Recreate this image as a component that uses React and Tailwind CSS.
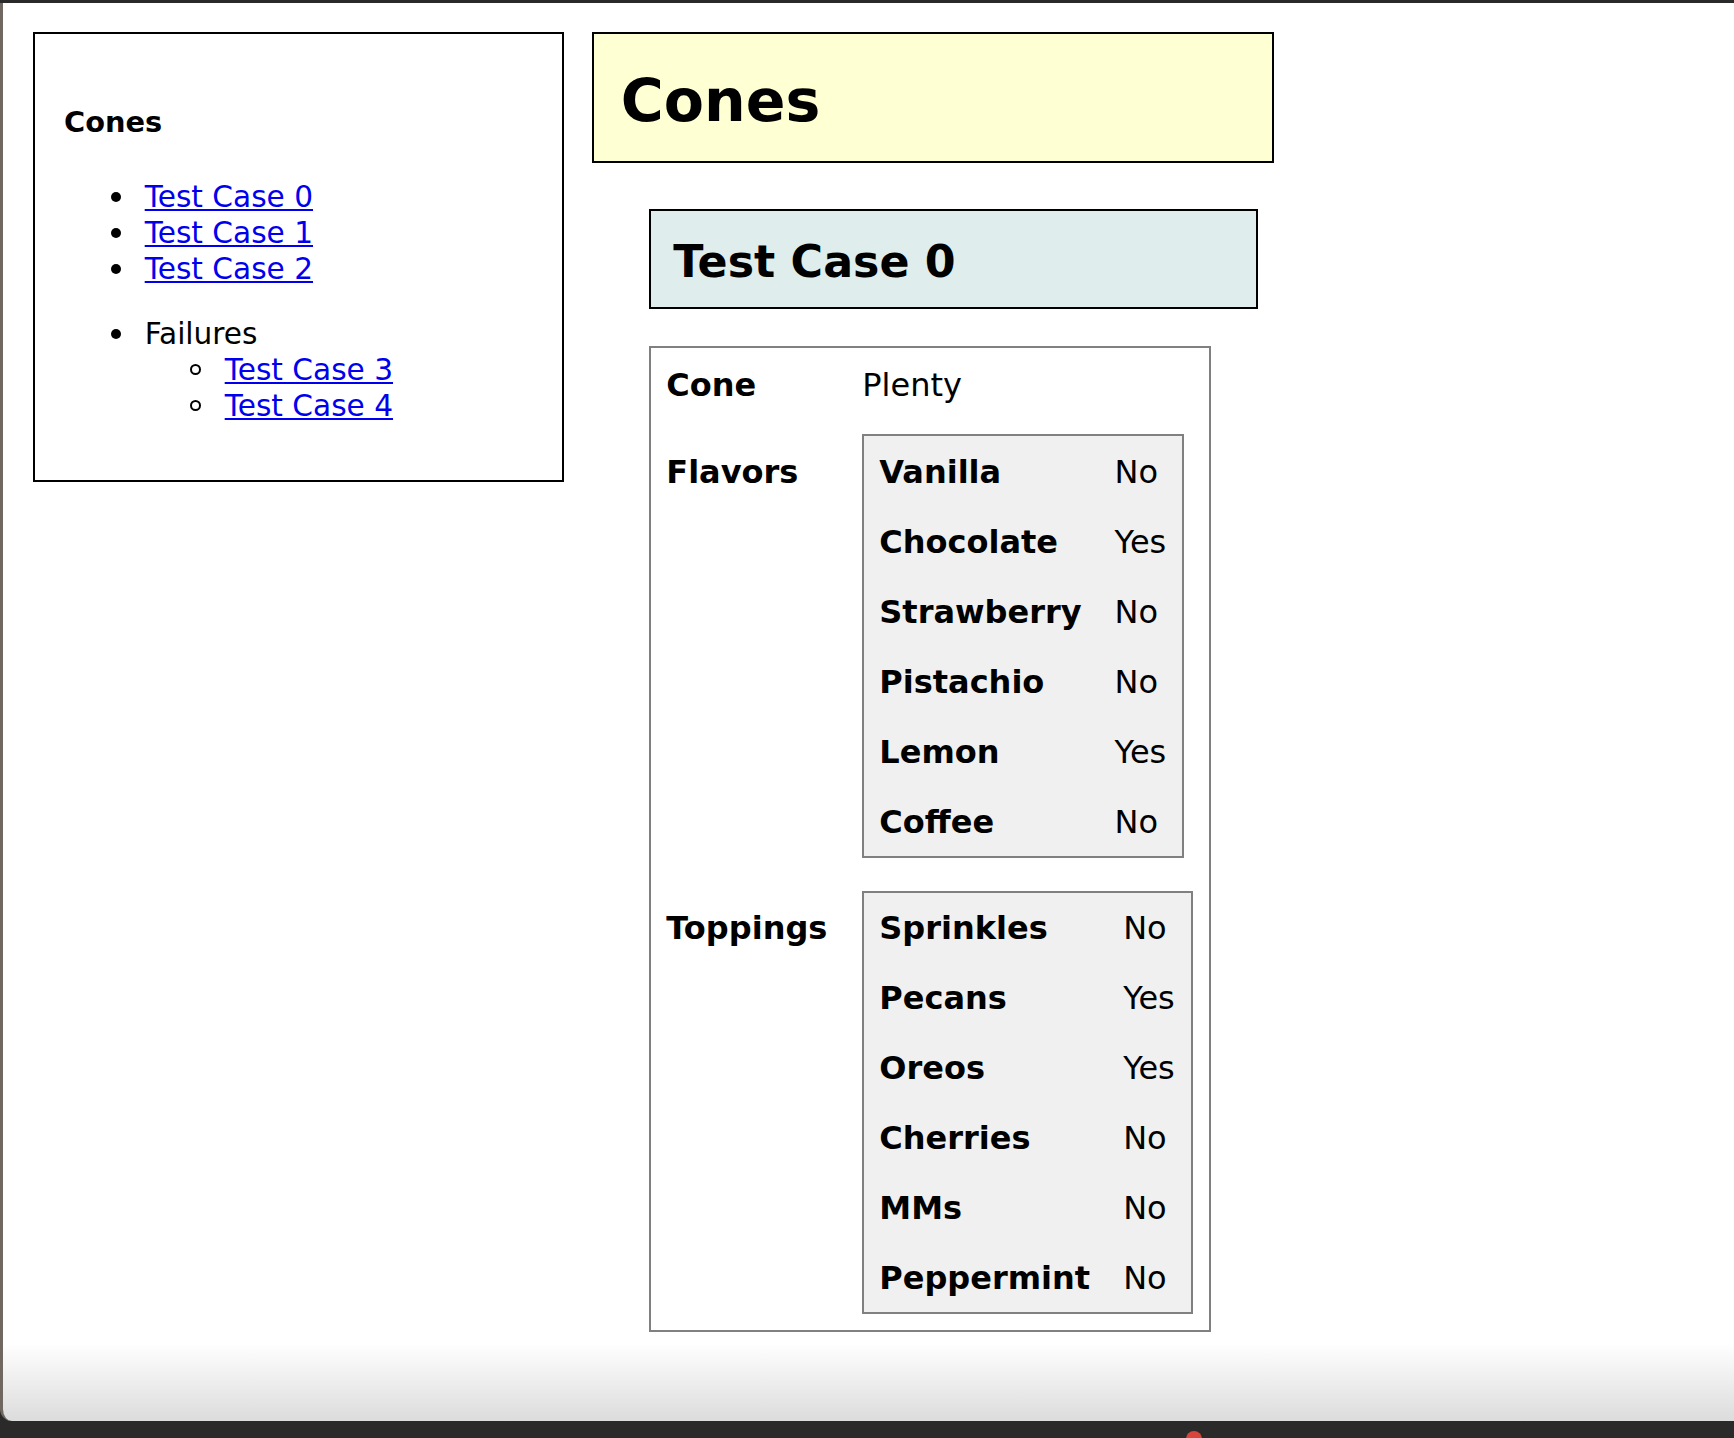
const flavors = [
  ["Vanilla", "No"],
  ["Chocolate", "Yes"],
  ["Strawberry", "No"],
  ["Pistachio", "No"],
  ["Lemon", "Yes"],
  ["Coffee", "No"],
];

const toppings = [
  ["Sprinkles", "No"],
  ["Pecans", "Yes"],
  ["Oreos", "Yes"],
  ["Cherries", "No"],
  ["MMs", "No"],
  ["Peppermint", "No"],
];

function Disc({ hollow }) {
  return hollow ? (
    <span className="-ml-[0.5px] block h-[11px] w-[11px] shrink-0 rounded-full border-2 border-black" />
  ) : (
    <span className="block h-[10px] w-[10px] shrink-0 rounded-full bg-black" />
  );
}

function NavItem({ children, hollow }) {
  return (
    <li className="flex items-center">
      <Disc hollow={hollow} />
      <span className={hollow ? "ml-[23.5px]" : "ml-[24px]"}>{children}</span>
    </li>
  );
}

function CaseLink({ label }) {
  return (
    <a href="#" className="text-[#0000ee] underline">
      {label}
    </a>
  );
}

function ChoiceTable({ rows }) {
  return (
    <div className="grid grid-cols-[auto_auto] gap-x-[33px] gap-y-[34px] border-2 border-[#808080] bg-[#f0f0f0] pt-[17.5px] pr-[16px] pb-[16px] pl-[15px]">
      {rows.map(([name, value]) => (
        <div key={name} className="contents">
          <div className="font-bold">{name}</div>
          <div>{value}</div>
        </div>
      ))}
    </div>
  );
}

export default function App() {
  return (
    <div
      className="relative h-[1438px] w-[1734px] overflow-hidden bg-[#2a2a2a] text-black"
      style={{ fontFamily: '"DejaVu Sans", Verdana, sans-serif' }}
    >
      <div className="mt-[3px] h-[1418px] rounded-bl-[12px] border-l-[3px] border-[#6e6861] bg-linear-to-b from-white from-[94.5%] to-[#dcdcdc]">
        <div className="flex items-start gap-[27.7px] pt-[28.5px] pl-[30px]">
          <nav className="w-[531px] border-2 border-black pt-[70px] pb-[56px] pl-[29px] text-[29.6px] leading-[36px]">
            <h3 className="text-[28.8px] font-bold">Cones</h3>
            <ul className="mt-[39px] ml-[46.7px]">
              <NavItem><CaseLink label="Test Case 0" /></NavItem>
              <NavItem><CaseLink label="Test Case 1" /></NavItem>
              <NavItem><CaseLink label="Test Case 2" /></NavItem>
            </ul>
            <ul className="mt-[29px] ml-[46.7px]">
              <li>
                <div className="flex items-center">
                  <Disc />
                  <span className="ml-[24px]">Failures</span>
                </div>
                <ul className="ml-[80px]">
                  <NavItem hollow><CaseLink label="Test Case 3" /></NavItem>
                  <NavItem hollow><CaseLink label="Test Case 4" /></NavItem>
                </ul>
              </li>
            </ul>
          </nav>

          <main className="w-[682px]">
            <header className="border-2 border-black bg-[#ffffd4] pt-[34.5px] pb-[25.5px] pl-[27px]">
              <h1 className="text-[58.6px] leading-[67.5px] font-bold">Cones</h1>
            </header>

            <section className="mt-[45.7px] ml-[57.6px]">
              <div className="w-[609px] border-2 border-black bg-[#dfeded] pt-[25.5px] pb-[20px] pl-[22px]">
                <h2 className="text-[44.3px] leading-[51px] font-bold">Test Case 0</h2>
              </div>

              <div className="mt-[36.7px] inline-block border-2 border-[#808080] pt-[19px] pr-[16.7px] pb-[16px] pl-[15px] text-[32px] leading-[36px]">
                <div className="flex items-start gap-x-[33px]">
                  <div className="w-[163px] font-bold">Cone</div>
                  <div>Plenty</div>
                </div>
                <div className="mt-[31.5px] flex items-start gap-x-[33px]">
                  <div className="w-[163px] pt-[19.5px] font-bold">Flavors</div>
                  <ChoiceTable rows={flavors} />
                </div>
                <div className="mt-[33px] flex items-start gap-x-[33px]">
                  <div className="w-[163px] pt-[19.5px] font-bold">Toppings</div>
                  <ChoiceTable rows={toppings} />
                </div>
              </div>
            </section>
          </main>
        </div>
      </div>
      <span className="absolute top-[1431px] left-[1186px] h-[16px] w-[16px] rounded-full bg-[#d8453a]" />
    </div>
  );
}
